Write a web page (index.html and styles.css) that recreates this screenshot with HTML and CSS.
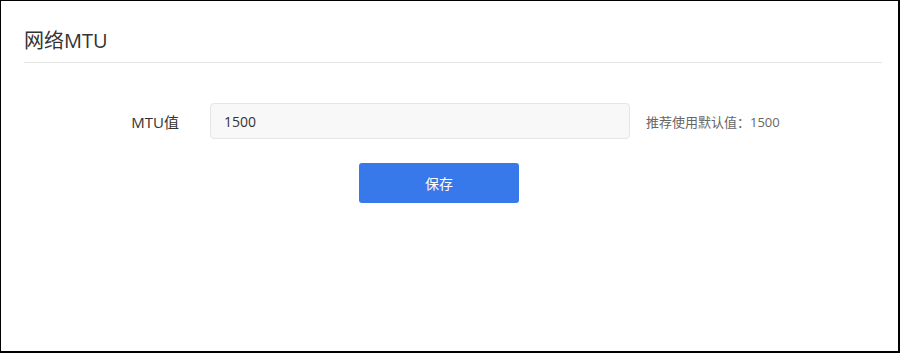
FILE: index.html
```html
<!DOCTYPE html>
<html lang="zh-CN">
<head>
    <meta charset="UTF-8">
    <meta name="viewport" content="width=device-width, initial-scale=1.0">
    <title>网络MTU</title>
    <link rel="stylesheet" href="styles.css">
</head>
<body>
    <div class="frame">
        <div class="panel">
            <h2 class="panel-title">网络MTU</h2>
            <form class="mtu-form" id="mtuForm">
                <div class="form-row">
                    <label class="form-label" for="mtu">MTU值</label>
                    <input class="form-input" type="text" id="mtu" name="mtu" value="1500">
                    <span class="form-tip">推荐使用默认值：1500</span>
                </div>
                <div class="form-actions">
                    <button type="submit" class="btn-save">保存</button>
                </div>
            </form>
        </div>
    </div>
</body>
</html>
```

FILE: styles.css
```css
html, body {
  margin: 0;
  padding: 0;
  background-color: #fff;
}
body {
  font-family: "Open Sans", "Noto Sans CJK SC", sans-serif;
  color: #333;
}
.frame {
  box-sizing: border-box;
  width: 900px;
  height: 353px;
  border-top: 1px solid #000;
  border-left: 1px solid #000;
  border-right: 2px solid #000;
  border-bottom: 2px solid #000;
}
.panel {
  padding: 0 16px 0 23px;
}
.panel-title {
  box-sizing: border-box;
  margin: 0;
  height: 62px;
  line-height: 79px;
  font-size: 20px;
  font-weight: normal;
  color: #333;
  border-bottom: 1px solid #e5e5e5;
  overflow: hidden;
}
/* form */
.mtu-form {
  padding-top: 40px;
}
.form-row {
  display: flex;
  align-items: center;
}
.form-label {
  width: 155px;
  text-align: right;
  font-size: 15px;
  color: #333;
}
.form-input {
  box-sizing: border-box;
  margin-left: 31px;
  width: 420px;
  height: 36px;
  padding: 0 13px;
  background-color: #f8f8f8;
  border: 1px solid #e6e6e6;
  border-radius: 4px;
  font-family: inherit;
  font-size: 14px;
  color: #333;
  outline: none;
}
.form-tip {
  margin-left: 16px;
  font-size: 13px;
  color: #666;
}
.form-actions {
  padding: 24px 0 0 335px;
}
.btn-save {
  width: 160px;
  height: 40px;
  background-color: #3778ea;
  color: #fff;
  border: none;
  border-radius: 3px;
  font-family: inherit;
  font-size: 14px;
  cursor: pointer;
}
```
